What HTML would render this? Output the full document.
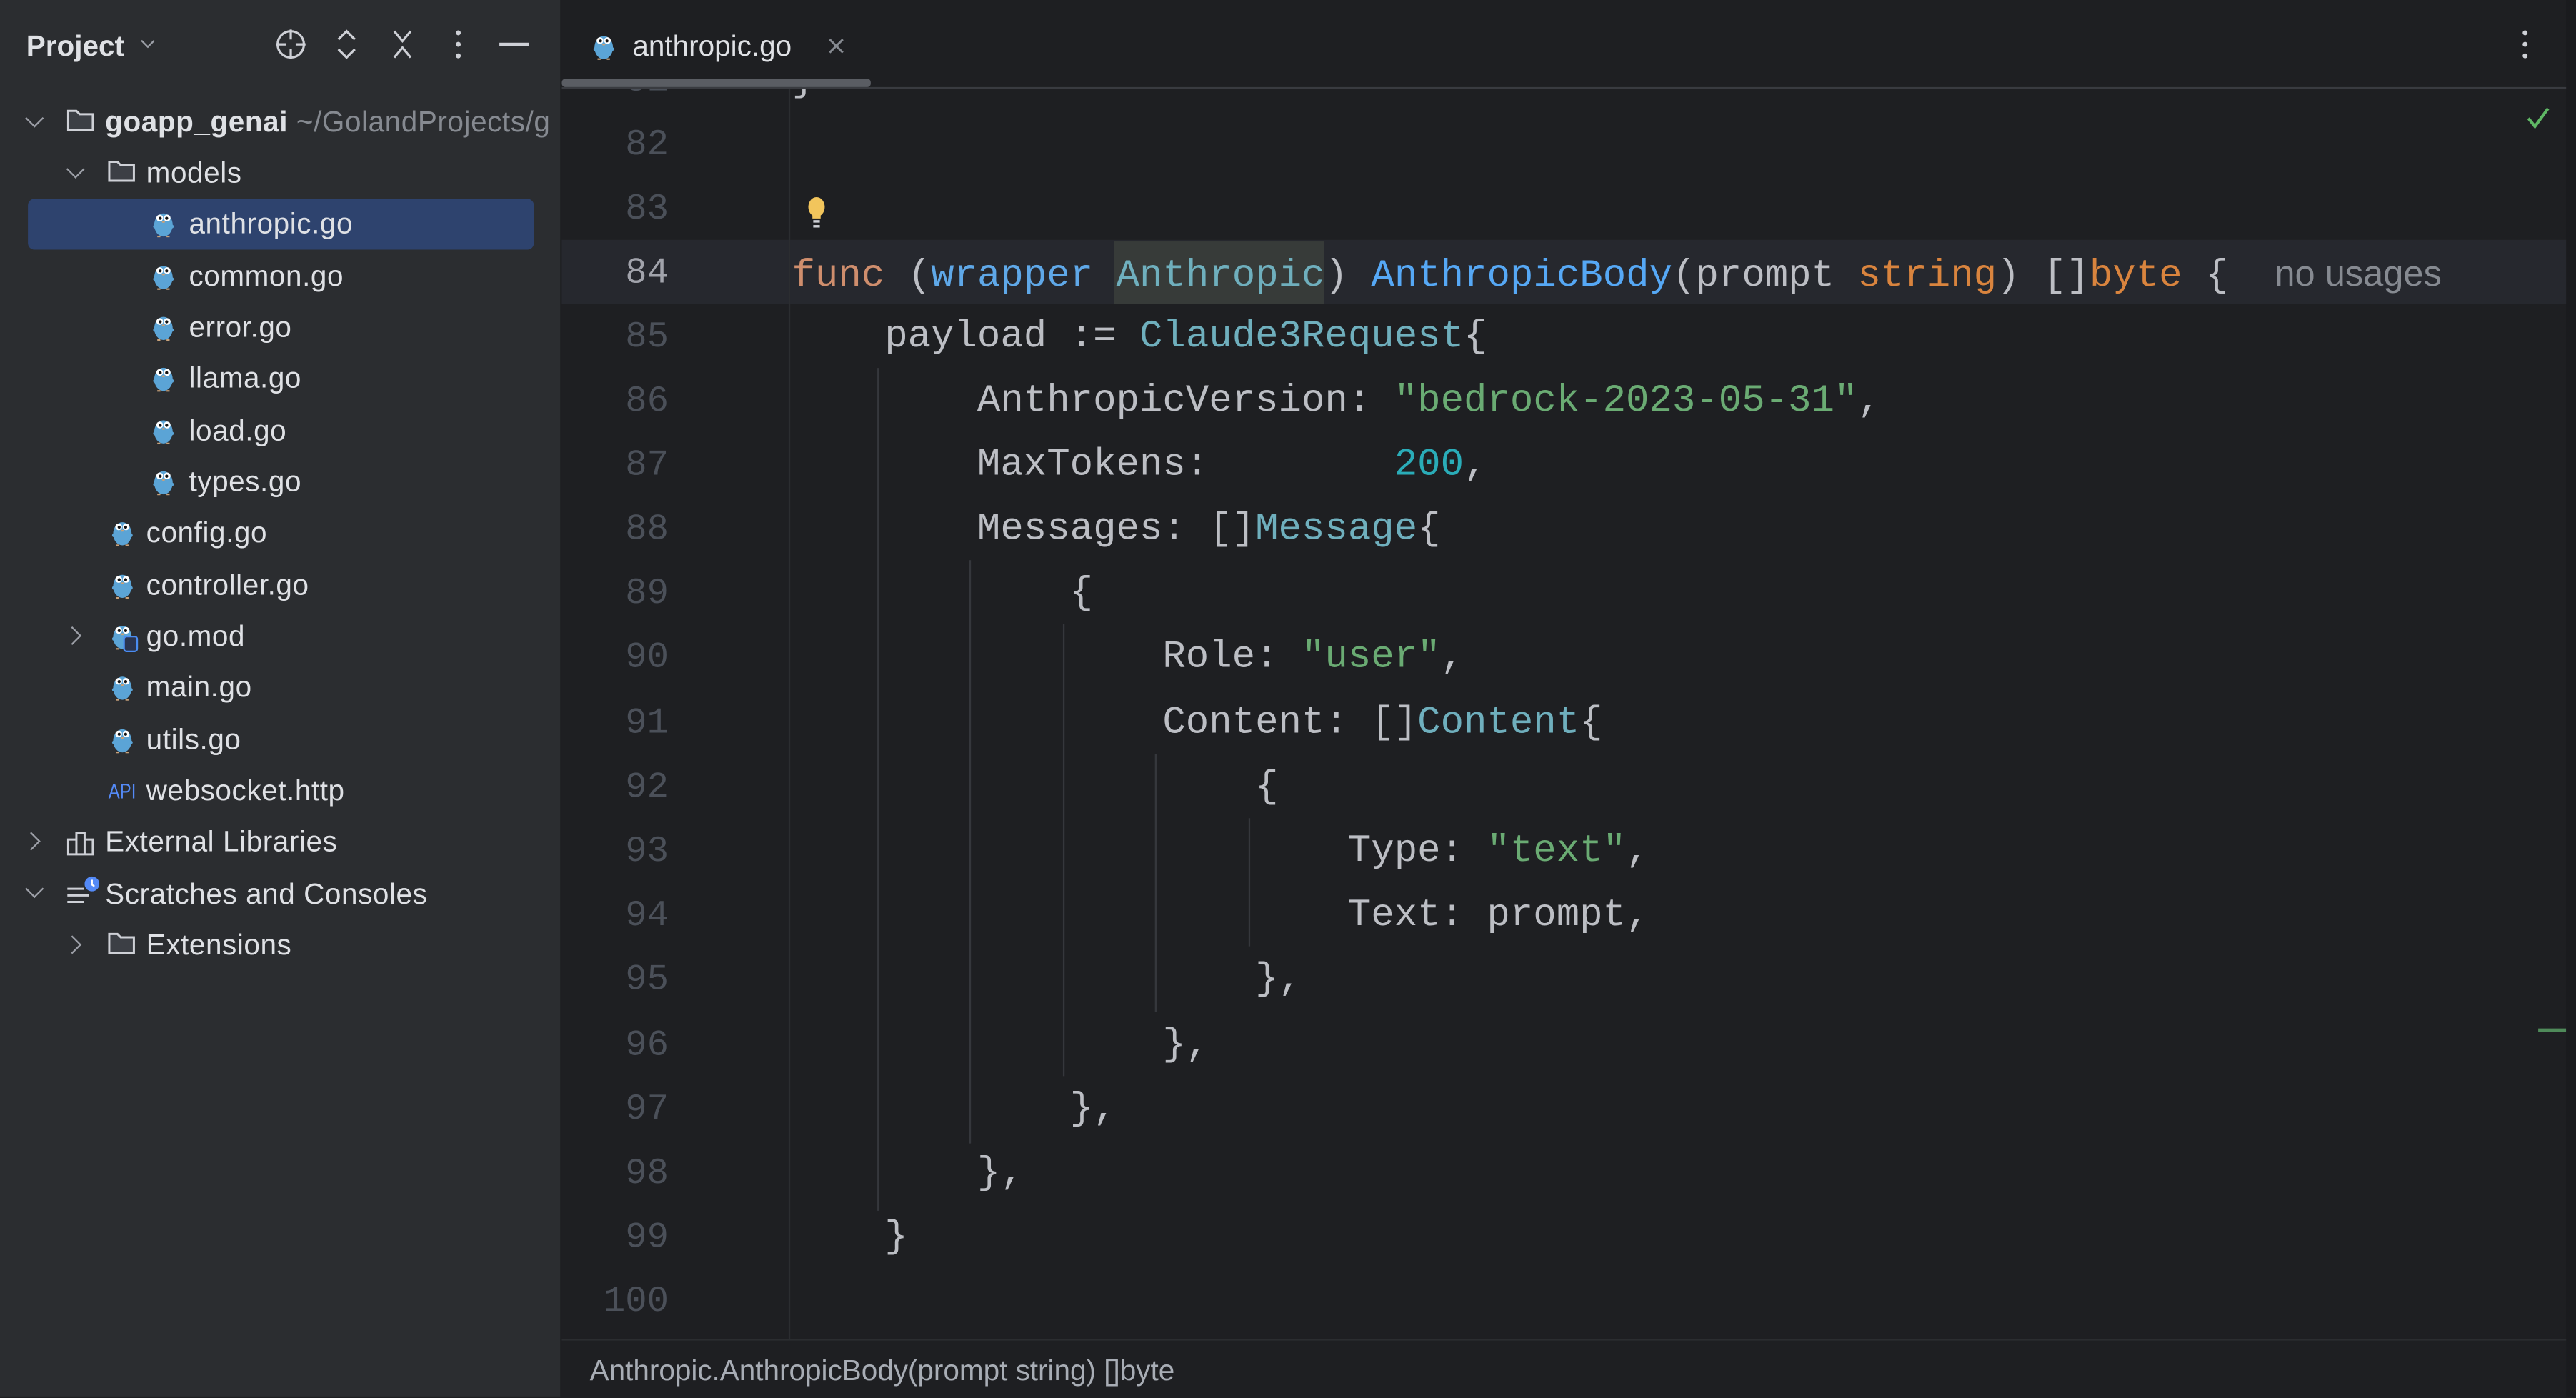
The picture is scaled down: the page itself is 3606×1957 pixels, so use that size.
<!DOCTYPE html>
<html><head><meta charset="utf-8"><style>
html,body{margin:0;padding:0;background:#1e1f22;overflow:hidden;width:3606px;height:1954px}
#w{position:absolute;left:0;top:0;width:1568px;height:850px;transform:scale(2.29974);transform-origin:0 0;background:#1e1f22;font-family:"Liberation Sans",sans-serif;color:#dfe1e5}
.a{position:absolute}
#side{left:0;top:0;width:341px;height:850px;background:#2b2d30;border-right:1px solid #1e1f22}
.row{position:absolute;height:31px;line-height:33px;font-size:17.6px;letter-spacing:0.25px;white-space:nowrap;color:#dfe1e5}
.chev{position:absolute;width:7px;height:7px;border-right:1.5px solid #9da0a8;border-bottom:1.5px solid #9da0a8}
.code{position:absolute;left:482px;height:39px;line-height:41px;font-family:"Liberation Mono",monospace;font-size:23.5px;color:#bcbec4;white-space:pre}
.ln{position:absolute;left:342px;width:65px;text-align:right;height:39px;line-height:41px;font-family:"Liberation Mono",monospace;font-size:22px;color:#4b5059}
.k{color:#cf8e6d}.f{color:#56a8f5}.t{color:#6fafbd}.s{color:#6aab73}.n{color:#2aacb8}.o{color:#d9843e}.p{color:#5fa8e8}
.g{position:absolute;width:1px;background:#35373c}
</style></head><body><div id="w">
<svg width="0" height="0" style="position:absolute"><defs>
<symbol id="go" viewBox="0 0 16 18"><ellipse cx="8" cy="10" rx="6" ry="7.5" fill="#5ba4d6"/><circle cx="2.5" cy="11" r="1.2" fill="#5ba4d6"/><circle cx="13.5" cy="11" r="1.2" fill="#5ba4d6"/><circle cx="5.6" cy="5.5" r="2.2" fill="#fff"/><circle cx="10.4" cy="5.5" r="2.2" fill="#fff"/><circle cx="5.9" cy="5.7" r="1" fill="#111"/><circle cx="10.1" cy="5.7" r="1" fill="#111"/><ellipse cx="8" cy="8" rx="1" ry=".6" fill="#c9a27a"/><rect x="4" y="17" width="2" height="1" fill="#c9a27a"/><rect x="10" y="17" width="2" height="1" fill="#c9a27a"/></symbol>
<symbol id="fold" viewBox="0 0 18 16"><path d="M1.5 2.5h5l2 2h8v9.5h-15z" fill="#3c3f45" stroke="#ced0d6" stroke-width="1.3"/></symbol>
</defs></svg>
<div id="side" class="a">
 <div class="a" style="left:16px;top:18px;font-size:17.6px;font-weight:bold;color:#dfe1e5">Project</div>
 <div class="chev" style="left:87px;top:22px;transform:rotate(45deg);width:5px;height:5px"></div>
 <svg class="a" style="left:167px;top:17px" width="20" height="20" viewBox="0 0 20 20" fill="none" stroke="#ced0d6" stroke-width="1.4"><circle cx="10" cy="10" r="8"/><path d="M10 1v6M10 13v6M1 10h6M13 10h6"/></svg>
 <svg class="a" style="left:203px;top:17px" width="16" height="20" viewBox="0 0 16 20" fill="none" stroke="#ced0d6" stroke-width="1.4"><path d="M3 7l5-5 5 5M3 13l5 5 5-5"/></svg>
 <svg class="a" style="left:237px;top:17px" width="16" height="20" viewBox="0 0 16 20" fill="none" stroke="#ced0d6" stroke-width="1.4"><path d="M3 2l5 6 5-6M3 18l5-6 5 6"/></svg>
 <svg class="a" style="left:274px;top:17px" width="10" height="20"><circle cx="5" cy="3" r="1.5" fill="#ced0d6"/><circle cx="5" cy="10" r="1.5" fill="#ced0d6"/><circle cx="5" cy="17" r="1.5" fill="#ced0d6"/></svg>
 <div class="a" style="left:304px;top:26px;width:18px;height:1.5px;background:#ced0d6"></div>
 <div class="a" style="left:17px;top:121px;width:308px;height:31px;background:#2e436e;border-radius:4px"></div>

 <div class="chev" style="left:17px;top:68px;transform:rotate(45deg)"></div>
 <svg class="a" style="left:40px;top:65px" width="18" height="16"><use href="#fold"/></svg>
 <div class="row" style="left:64px;top:58px"><b>goapp_genai</b> <span style="color:#868a91">~/GolandProjects/g</span></div>

 <div class="chev" style="left:42px;top:99px;transform:rotate(45deg)"></div>
 <svg class="a" style="left:65px;top:96px" width="18" height="16"><use href="#fold"/></svg>
 <div class="row" style="left:89px;top:89px">models</div>

 <svg class="a" style="left:92px;top:127px" width="15" height="18"><use href="#go"/></svg><div class="row" style="left:115px;top:120px">anthropic.go</div>
 <svg class="a" style="left:92px;top:159px" width="15" height="18"><use href="#go"/></svg><div class="row" style="left:115px;top:152px">common.go</div>
 <svg class="a" style="left:92px;top:190px" width="15" height="18"><use href="#go"/></svg><div class="row" style="left:115px;top:183px">error.go</div>
 <svg class="a" style="left:92px;top:221px" width="15" height="18"><use href="#go"/></svg><div class="row" style="left:115px;top:214px">llama.go</div>
 <svg class="a" style="left:92px;top:253px" width="15" height="18"><use href="#go"/></svg><div class="row" style="left:115px;top:246px">load.go</div>
 <svg class="a" style="left:92px;top:284px" width="15" height="18"><use href="#go"/></svg><div class="row" style="left:115px;top:277px">types.go</div>
 <svg class="a" style="left:67px;top:315px" width="15" height="18"><use href="#go"/></svg><div class="row" style="left:89px;top:308px">config.go</div>
 <svg class="a" style="left:67px;top:347px" width="15" height="18"><use href="#go"/></svg><div class="row" style="left:89px;top:340px">controller.go</div>
 <div class="chev" style="left:40px;top:383px;transform:rotate(-45deg)"></div>
 <svg class="a" style="left:67px;top:378px" width="15" height="18"><use href="#go"/></svg><div class="a" style="left:75px;top:387px;width:7px;height:8px;border:1.5px solid #4a8cf2;border-radius:2px;background:#2b3550"></div><div class="row" style="left:89px;top:371px">go.mod</div>
 <svg class="a" style="left:67px;top:409px" width="15" height="18"><use href="#go"/></svg><div class="row" style="left:89px;top:402px">main.go</div>
 <svg class="a" style="left:67px;top:441px" width="15" height="18"><use href="#go"/></svg><div class="row" style="left:89px;top:434px">utils.go</div>
 <div class="a" style="left:66px;top:474px;font-family:'Liberation Sans Narrow','Liberation Sans',sans-serif;font-size:13px;color:#548af7;transform:scaleX(.8);transform-origin:0 0">API</div><div class="row" style="left:89px;top:465px">websocket.http</div>
 <div class="chev" style="left:15px;top:508px;transform:rotate(-45deg)"></div>
 <svg class="a" style="left:40px;top:503px" width="20" height="18" fill="none" stroke="#ced0d6" stroke-width="1.3"><path d="M1.5 8h5v9h-5zM6.5 4h5v13h-5zM11.5 8h5v9h-5z"/></svg>
 <div class="row" style="left:64px;top:496px">External Libraries</div>
 <div class="chev" style="left:17px;top:537px;transform:rotate(45deg)"></div>
 <svg class="a" style="left:40px;top:533px" width="22" height="20"><path d="M1 8h10M1 12h13M1 16h10" stroke="#ced0d6" stroke-width="1.3"/><circle cx="16" cy="5" r="4.5" fill="#548af7"/><path d="M16 2.5v3l1.5 1" stroke="#fff" stroke-width="1" fill="none"/></svg>
 <div class="row" style="left:64px;top:528px">Scratches and Consoles</div>
 <div class="chev" style="left:40px;top:571px;transform:rotate(-45deg)"></div>
 <svg class="a" style="left:65px;top:566px" width="18" height="16"><use href="#fold"/></svg>
 <div class="row" style="left:89px;top:559px">Extensions</div>
</div>

<!-- editor -->
<div class="a" style="left:342px;top:146px;width:1221px;height:39px;background:#26282e"></div>
<div class="a" style="left:480px;top:54px;width:1px;height:761px;background:#2b2d30"></div>
<div class="a" style="left:678px;top:147px;width:128px;height:38px;background:#373b39"></div>
<div class="g" style="left:534px;top:224px;height:513px"></div>
<div class="g" style="left:590px;top:341px;height:355px"></div>
<div class="g" style="left:647px;top:380px;height:275px"></div>
<div class="g" style="left:703px;top:459px;height:157px"></div>
<div class="g" style="left:760px;top:498px;height:78px"></div>

<div class="ln" style="top:29px">81</div>
<div class="code" style="top:29px">}</div>
<div class="ln" style="top:68px">82</div>
<div class="ln" style="top:107px">83</div>
<div class="ln" style="top:146px;color:#a1a3ab">84</div>
<div class="ln" style="top:185px">85</div>
<div class="ln" style="top:224px">86</div>
<div class="ln" style="top:263px">87</div>
<div class="ln" style="top:302px">88</div>
<div class="ln" style="top:341px">89</div>
<div class="ln" style="top:380px">90</div>
<div class="ln" style="top:420px">91</div>
<div class="ln" style="top:459px">92</div>
<div class="ln" style="top:498px">93</div>
<div class="ln" style="top:537px">94</div>
<div class="ln" style="top:576px">95</div>
<div class="ln" style="top:616px">96</div>
<div class="ln" style="top:655px">97</div>
<div class="ln" style="top:694px">98</div>
<div class="ln" style="top:733px">99</div>
<div class="ln" style="top:772px">100</div>

<!-- tab bar (covers line 81) -->
<div class="a" style="left:342px;top:0;width:1221px;height:53px;background:#1e1f22"></div>
<svg class="a" style="left:360px;top:19px" width="15" height="18"><use href="#go"/></svg>
<div class="a" style="left:385px;top:18px;font-size:17.6px;color:#dfe1e5">anthropic.go</div>
<svg class="a" style="left:504px;top:23px" width="10" height="10" stroke="#868a91" stroke-width="1.3"><path d="M1 1l8 8M9 1l-8 8"/></svg>
<svg class="a" style="left:1532px;top:17px" width="10" height="20"><circle cx="5" cy="3" r="1.5" fill="#ced0d6"/><circle cx="5" cy="10" r="1.5" fill="#ced0d6"/><circle cx="5" cy="17" r="1.5" fill="#ced0d6"/></svg>
<div class="a" style="left:342px;top:53px;width:1221px;height:1px;background:#393b40"></div>

<svg class="a" style="left:490px;top:119px" width="14" height="22"><ellipse cx="7" cy="7" rx="5" ry="6" fill="#f2c55c"/><rect x="4.5" y="12" width="5" height="2" fill="#f2c55c"/><rect x="5" y="15" width="4" height="1.5" fill="#ced0d6"/><rect x="5" y="18" width="4" height="1.5" fill="#ced0d6"/></svg>

<div class="code" style="top:146px"><span class="k">func</span> (<span class="p">wrapper</span> <span class="t">Anthropic</span>) <span class="f">AnthropicBody</span>(prompt <span class="o">string</span>) []<span class="o">byte</span> {  <span style="font-family:'Liberation Sans',sans-serif;font-size:22px;color:#868a91">no usages</span></div>
<div class="code" style="top:185px">    payload := <span class="t">Claude3Request</span>{</div>
<div class="code" style="top:224px">        AnthropicVersion: <span class="s">"bedrock-2023-05-31"</span>,</div>
<div class="code" style="top:263px">        MaxTokens:        <span class="n">200</span>,</div>
<div class="code" style="top:302px">        Messages: []<span class="t">Message</span>{</div>
<div class="code" style="top:341px">            {</div>
<div class="code" style="top:380px">                Role: <span class="s">"user"</span>,</div>
<div class="code" style="top:420px">                Content: []<span class="t">Content</span>{</div>
<div class="code" style="top:459px">                    {</div>
<div class="code" style="top:498px">                        Type: <span class="s">"text"</span>,</div>
<div class="code" style="top:537px">                        Text: prompt,</div>
<div class="code" style="top:576px">                    },</div>
<div class="code" style="top:616px">                },</div>
<div class="code" style="top:655px">            },</div>
<div class="code" style="top:694px">        },</div>
<div class="code" style="top:733px">    }</div>

<div class="a" style="left:342px;top:48px;width:188px;height:5px;background:#5a5d63;border-radius:2px"></div>
<svg class="a" style="left:1537px;top:64px" width="16" height="16" fill="none" stroke="#5fb865" stroke-width="1.8"><path d="M2 8l4 5 8-11"/></svg>
<div class="a" style="left:1545px;top:626px;width:17px;height:2px;background:#4f8a5a"></div>
<div class="a" style="left:1562px;top:0;width:6px;height:850px;background:#1a1b1e"></div>

<!-- status -->
<div class="a" style="left:342px;top:815px;width:1220px;height:35px;background:#1e1f22;border-top:1px solid #2b2d30"></div>
<div class="a" style="left:359px;top:824px;font-size:17.6px;color:#a8adb5">Anthropic.AnthropicBody(prompt string) []byte</div>
</div></body></html>
